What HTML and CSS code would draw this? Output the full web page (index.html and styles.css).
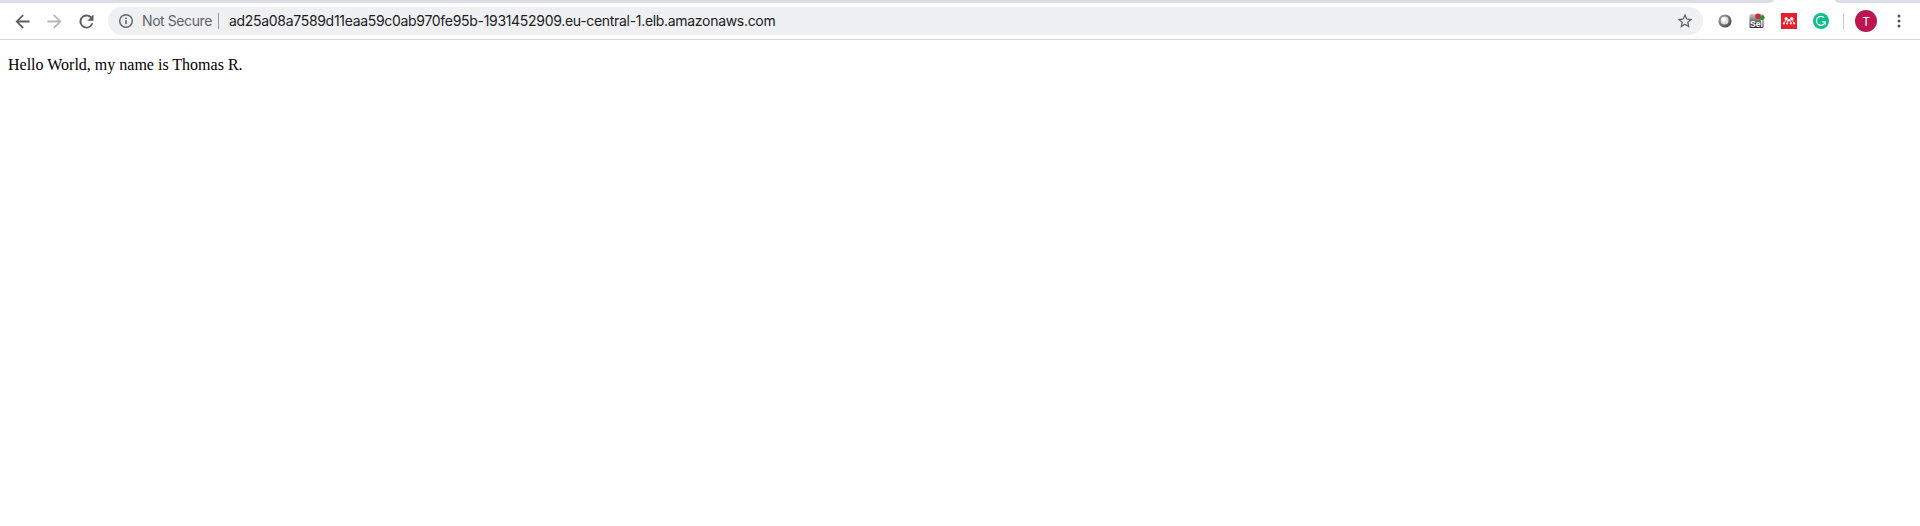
FILE: index.html
```html
<!DOCTYPE html>
<html lang="en">
<head>
<meta charset="utf-8">
<title>Hello World</title>
<link rel="stylesheet" href="styles.css">
</head>
<body>
<div class="tabstrip"><div class="tabs-left"></div><div class="tabs-right"></div></div>
<header class="toolbar">
  <nav class="nav">
    <svg class="icon" viewBox="0 0 24 24"><path fill="#5a5d61" d="M20 10.8H7.9l5.6-5.4L12 4l-8 8 8 8 1.5-1.4-5.6-5.4H20z"/></svg>
    <svg class="icon" viewBox="0 0 24 24"><path fill="#b5b7b9" d="M4 10.8h12.1l-5.6-5.4L12 4l8 8-8 8-1.5-1.4 5.6-5.4H4z"/></svg>
    <svg class="icon" viewBox="0 0 24 24"><path fill="#5a5d61" d="M17.65 6.35A8 8 0 1 0 19.73 14h-2.2A5.8 5.8 0 1 1 12 6.2c1.6 0 3 .65 4.1 1.7L13 11h7V4z"/></svg>
  </nav>
  <div class="omnibox">
    <svg class="info" viewBox="0 0 16 16"><circle cx="8" cy="8" r="6.3" fill="none" stroke="#5f6368" stroke-width="1.4"/><path fill="#5f6368" d="M7.2 7.2h1.6v4H7.2zM7.2 4.6h1.6v1.5H7.2z"/></svg>
    <span class="status">Not Secure</span>
    <span class="divider"></span>
    <span class="url">ad25a08a7589d11eaa59c0ab970fe95b-1931452909.eu-central-1.elb.amazonaws.com</span>
    <svg class="star" viewBox="0 0 24 24"><path fill="#5a5d61" d="M22 9.24l-7.19-.62L12 2 9.19 8.63 2 9.24l5.46 4.73L5.82 21 12 17.27 18.18 21l-1.63-7.03zM12 15.4l-3.76 2.27 1-4.28-3.32-2.88 4.38-.38L12 6.1l1.71 4.04 4.38.38-3.32 2.88 1 4.28z"/></svg>
  </div>
  <div class="extensions">
    <svg class="ext" viewBox="0 0 16 16">
      <defs><linearGradient id="ring" x1="0" y1="0" x2="1" y2="1"><stop offset="0" stop-color="#a8a8a8"/><stop offset=".5" stop-color="#727272"/><stop offset="1" stop-color="#444"/></linearGradient></defs>
      <circle cx="8" cy="8" r="6.6" fill="url(#ring)"/><circle cx="7.6" cy="7.5" r="4" fill="#dedede"/><circle cx="6.7" cy="6.5" r="2.2" fill="#fff"/>
    </svg>
    <svg class="ext" viewBox="0 0 16 16">
      <defs><linearGradient id="box" x1="0" y1="0" x2="0" y2="1"><stop offset="0" stop-color="#ccc"/><stop offset=".45" stop-color="#777"/><stop offset="1" stop-color="#292929"/></linearGradient></defs>
      <rect x=".5" y="1" width="14" height="14" rx="1.5" fill="url(#box)"/>
      <circle cx="9" cy="3.3" r="2.8" fill="#c72e32"/><circle cx="13.4" cy="4.6" r="2.3" fill="#27942f"/>
      <text class="selenium" x="1" y="13.8">Sel</text>
    </svg>
    <svg class="ext" viewBox="0 0 16 16">
      <rect width="16" height="16" fill="#e9202c"/>
      <g fill="#fff"><circle cx="5.2" cy="5.6" r="1.6"/><circle cx="10.8" cy="5.6" r="1.6"/><circle cx="8" cy="7.2" r="1.3"/><circle cx="2.9" cy="10.4" r="1.1"/><circle cx="6.2" cy="10.4" r="1"/><circle cx="9.8" cy="10.4" r="1"/><circle cx="13.1" cy="10.4" r="1.1"/></g>
      <path d="M3 10.2q1.3-1.1 1.4-3.6M13 10.2q-1.3-1.1-1.4-3.6M6.2 10.2V6.5M9.8 10.2V6.5" fill="none" stroke="#fff" stroke-width=".8"/>
    </svg>
    <svg class="ext" viewBox="0 0 16 16">
      <circle cx="8" cy="8" r="8" fill="#0bbf8b"/>
      <path d="M11.2 4.7A4.5 4.5 0 1 0 12.3 8.8H9.2M12.2 8.8v2.6" fill="none" stroke="#fff" stroke-width="1.2"/>
    </svg>
  </div>
  <span class="separator"></span>
  <div class="avatar">T</div>
  <svg class="menu" viewBox="0 0 16 16" fill="#505357"><circle cx="8" cy="3.1" r="1.5"/><circle cx="8" cy="8.1" r="1.5"/><circle cx="8" cy="13.1" r="1.5"/></svg>
</header>
<main class="page">Hello World, my name is Thomas R.</main>
</body>
</html>
```
FILE: styles.css
```css
* { box-sizing: border-box; }
body { margin: 0; background: #fff; font-family: Inter, "Liberation Sans", sans-serif; }
svg { display: block; flex: none; }
.tabstrip { display: flex; justify-content: space-between; height: 3px; }
.tabs-left { width: 1774px; background: #dadde3; border-bottom-right-radius: 6px 3px; }
.tabs-right { width: 85px; background: #dadde3; border-bottom-left-radius: 6px 3px; }
.toolbar { display: flex; align-items: center; height: 37px; padding: 0 11px; border-bottom: 1px solid #d3d5d7; }
.nav { display: flex; gap: 11px; width: 97px; padding-left: .5px; }
.icon { width: 21px; height: 21px; }
.omnibox { display: flex; align-items: center; width: 1595px; height: 28px; padding: 0 9px 0 10px; border-radius: 14px; background: #eff0f2; font-size: 14px; line-height: 17px; white-space: nowrap; }
.info { width: 16px; height: 16px; }
.status { width: 76px; padding: 0 0 1px 8px; color: #5f6368; letter-spacing: -.42px; }
.divider { width: 1px; height: 16px; margin: 0 10px 0 8px; background: #96999d; }
.url { flex: 1; padding-bottom: 1px; color: #202124; letter-spacing: -.31px; }
.star { width: 18px; height: 18px; }
.extensions { display: flex; gap: 16px; margin-left: 14px; }
.ext { width: 16px; height: 16px; }
.selenium { font: bold 8.5px "Liberation Sans", sans-serif; fill: #fff; }
.separator { width: 1px; height: 16px; margin: 0 11px 0 14px; background: #c8cacd; }
.avatar { display: flex; align-items: center; justify-content: center; width: 22px; height: 22px; border-radius: 50%; background: #bd1550; color: #fff; font-size: 12px; }
.menu { width: 16px; height: 16px; margin-left: 14px; }
.page { padding: 16px 8px; color: #000; font: 16px/18px "Liberation Serif", serif; }
```
